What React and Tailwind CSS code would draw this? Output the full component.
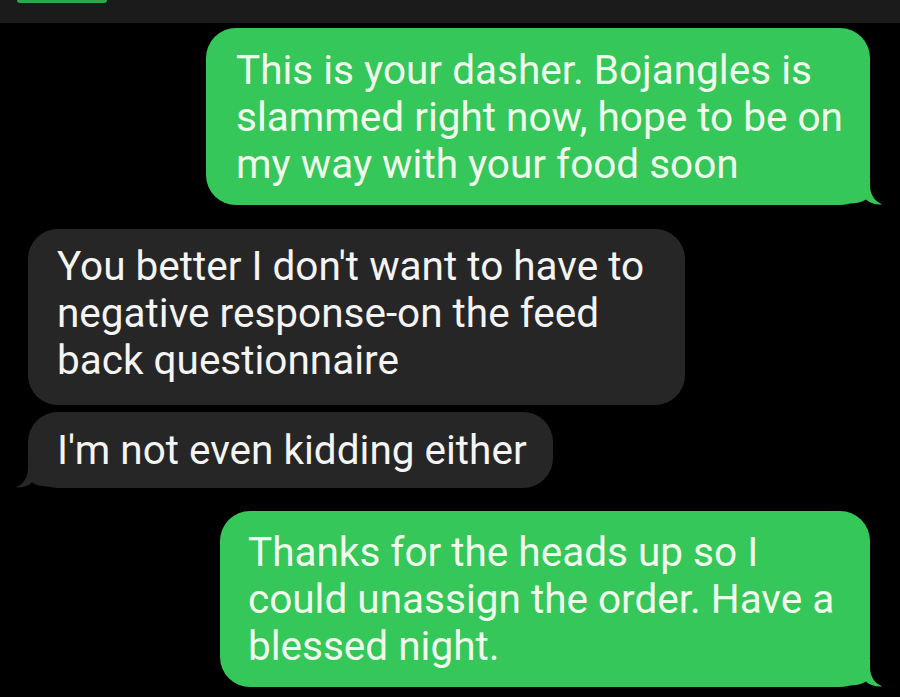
import React from 'react';

const font = { fontFamily: 'Roboto, "Noto Sans", sans-serif' };

const RightTail = ({ color }) => (
  <svg
    className="absolute right-[-14px] bottom-0"
    width="39"
    height="28"
    viewBox="0 0 39 28"
    fill={color}
  >
    <path d="M25 0 V8 C25 17 29 24 37.5 27.5 C31 28 25 26.5 21 22.5 C16 25.5 10 26.5 4 26.5 L0 26 V0 Z" />
  </svg>
);

const LeftTail = ({ color }) => (
  <svg
    className="absolute left-[-14px] bottom-0"
    width="39"
    height="28"
    viewBox="0 0 39 28"
    fill={color}
  >
    <path d="M14 0 V8 C14 17 10 24 1.5 27.5 C8 28 14 26.5 18 22.5 C23 25.5 29 26.5 35 26.5 L39 26 V0 Z" />
  </svg>
);

const Lines = ({ lines, className }) => (
  <div className={className}>
    {lines.map((l) => (
      <div key={l} className="whitespace-nowrap">
        {l}
      </div>
    ))}
  </div>
);

export default function App() {
  return (
    <div className="w-[900px] h-[697px] bg-black overflow-hidden" style={font}>
      {/* top strip */}
      <div className="h-[23px] bg-[#1b1b1b] pl-[17px]">
        <div className="w-[90px] h-[3px] rounded-b-[3px] bg-[#2aa84a]" />
      </div>

      <div className="flex flex-col">
        {/* outgoing 1 */}
        <div className="relative self-end mr-[30px] mt-[5px] w-[664px] rounded-[30px] bg-[#35c759] pl-[30px] pt-[19px] pb-[17px]">
          <Lines
            className="relative z-10 text-[40.5px] leading-[47px] text-[#effcec]"
            lines={[
              'This is your dasher. Bojangles is',
              'slammed right now, hope to be on',
              'my way with your food soon',
            ]}
          />
          <RightTail color="#35c759" />
        </div>

        {/* incoming */}
        <div className="ml-[28px] mt-[24px] w-[657px] rounded-[30px] bg-[#262626] pl-[29px] pt-[14px] pb-[21px]">
          <Lines
            className="text-[40.5px] leading-[47px] text-[#f4f4f4]"
            lines={[
              "You better I don't want to have to",
              'negative response-on the feed',
              'back questionnaire',
            ]}
          />
        </div>

        <div className="relative ml-[28px] mt-[7px] w-[525px] rounded-[30px] bg-[#262626] pl-[29px] pt-[15px] pb-[14px]">
          <Lines
            className="relative z-10 text-[40.5px] leading-[47px] text-[#f4f4f4]"
            lines={["I'm not even kidding either"]}
          />
          <LeftTail color="#262626" />
        </div>

        {/* outgoing 2 */}
        <div className="relative self-end mr-[30px] mt-[23px] w-[650px] rounded-[30px] bg-[#35c759] pl-[28px] pt-[18px] pb-[17px]">
          <Lines
            className="relative z-10 text-[40.5px] leading-[47px] text-[#effcec]"
            lines={[
              'Thanks for the heads up so I',
              'could unassign the order. Have a',
              'blessed night.',
            ]}
          />
          <RightTail color="#35c759" />
        </div>
      </div>
    </div>
  );
}
